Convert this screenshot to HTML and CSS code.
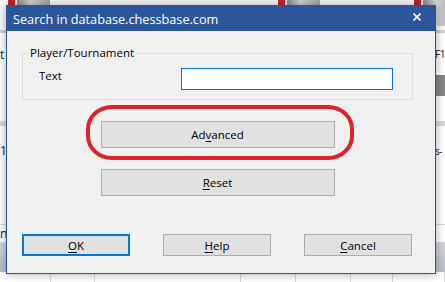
FILE: index.html
```html
<!DOCTYPE html>
<html lang="en">
<head>
    <meta charset="UTF-8">
    <meta name="viewport" content="width=device-width, initial-scale=1.0">
    <title>Search in database.chessbase.com</title>
    <link rel="stylesheet" href="styles.css">
</head>
<body>
    <!-- the application window behind the dialog -->
    <div class="backdrop">
        <div class="ribbon">
            <div class="tool tool-left"><span class="flag"></span><span class="drum"></span></div>
            <span class="sep sep-one"></span>
            <span class="sep sep-two"></span>
            <div class="tool tool-mid"><span class="flag"></span><span class="drum"></span></div>
            <div class="tool tool-right"><span class="flag"></span><span class="drum"></span></div>
        </div>
        <div class="ribbon-line"></div>
        <div class="row row-title">
            <div class="cut">t</div>
            <div class="tail">F1</div>
        </div>
        <div class="row row-tools">
            <div class="cut"></div>
            <div class="tail"><span class="tail-block"></span></div>
        </div>
        <div class="row row-gap"></div>
        <div class="row-band"></div>
        <div class="row row-item">
            <div class="cut">10</div>
            <div class="tail">s-</div>
        </div>
        <div class="row row-empty"></div>
        <div class="row row-last">
            <div class="cut">ns</div>
            <div class="tail"></div>
        </div>
        <div class="status-band"></div>
        <div class="table-row">
            <span></span><span></span><span></span><span></span><span></span><span></span><span></span>
        </div>
    </div>

    <div class="dialog">
        <div class="titlebar">
            <span class="title">Search in database.chessbase.com</span>
            <span class="close">
                <svg width="8" height="8" viewBox="0 0 8 8">
                    <path d="M0.5 0.5 L7.5 7.5 M7.5 0.5 L0.5 7.5" stroke="#fff" stroke-width="1.6" fill="none"/>
                </svg>
            </span>
        </div>

        <div class="content">
            <fieldset class="group">
                <legend>Player/Tournament</legend>
                <div class="field-row">
                    <label for="text">Text</label>
                    <input type="text" id="text" class="text-input">
                </div>
            </fieldset>

            <div class="advanced-wrap">
                <button class="btn btn-wide">Ad<u>v</u>anced</button>
                <span class="mark"></span>
            </div>

            <button class="btn btn-wide btn-reset"><u>R</u>eset</button>

            <div class="actions">
                <button class="btn btn-small btn-default"><u>O</u>K</button>
                <button class="btn btn-small"><u>H</u>elp</button>
                <button class="btn btn-small"><u>C</u>ancel</button>
            </div>
        </div>
    </div>
</body>
</html>
```

FILE: styles.css
```css
* {
    margin: 0;
    padding: 0;
    box-sizing: border-box;
}

body {
    position: relative;
    width: 445px;
    height: 282px;
    overflow: hidden;
    background: #fff;
    font-family: 'Open Sans', 'Noto Sans', sans-serif;
    font-size: 11.5px;
    color: #000;
}

/* ---------- background window ---------- */

.backdrop {
    display: flex;
    flex-direction: column;
    height: 100%;
    font-size: 12px;
    color: #222;
}

.ribbon {
    display: flex;
    align-items: flex-start;
    height: 30px;
    background: #fafafa;
}

.tool {
    display: flex;
    align-items: flex-start;
}

.flag {
    width: 7px;
    height: 12px;
    background: #c8202c;
}

.drum {
    width: 33px;
    height: 26px;
    margin-left: 2px;
    border-radius: 0 0 14px 14px / 0 0 6px 6px;
    background: linear-gradient(90deg, #8d8d8d, #d6d6d6 40%, #a4a4a4);
}

.tool-left { margin-left: 8px; }
.tool-mid { margin-left: 91px; }
.tool-right { margin-left: 94px; }

.sep {
    width: 1px;
    height: 30px;
    background: #c9c9c9;
}

.sep-one { margin-left: 91px; }
.sep-two { margin-left: 46px; }

.ribbon-line {
    height: 3px;
    background: #cfd1d4;
}

.row {
    display: flex;
    justify-content: space-between;
    align-items: center;
}

.cut {
    width: 14px;
    white-space: nowrap;
}

.tail {
    width: 10px;
    white-space: nowrap;
    font-size: 10px;
    letter-spacing: -0.5px;
}

.row-title { height: 42px; }
.row-tools { height: 21px; }
.row-gap { height: 25px; }
.row-item { height: 49px; }
.row-empty { height: 50px; border-bottom: 1px solid #d8d8d8; }
.row-last { height: 17px; }

.tail-block {
    display: block;
    width: 10px;
    height: 21px;
    background: #858585;
}

.row-band {
    height: 5px;
    background: #d9d9d9;
}

.status-band {
    height: 30px;
    background: linear-gradient(180deg, #d3d6db, #b9bec6);
}

.table-row {
    display: grid;
    grid-template-columns: 51px 44px 146px 55px 55px 42px 1fr;
    flex: 1;
}

.table-row span {
    border-right: 1px solid #d9d9d9;
}

/* ---------- dialog ---------- */

.dialog {
    position: absolute;
    left: 6px;
    top: 5px;
    width: 430px;
    height: 269px;
    display: flex;
    flex-direction: column;
    background: #f0f0f0;
    border: 1px solid #2b579a;
    box-shadow: 0 0 9px rgba(0, 0, 0, 0.35);
}

.titlebar {
    display: flex;
    justify-content: space-between;
    align-items: center;
    flex: none;
    height: 25px;
    padding: 0 14px 0 6px;
    background: #2b579a;
    color: #fff;
}

.title {
    font-size: 12.7px;
}

.close {
    align-self: flex-start;
    margin-top: 7px;
}

.close svg {
    display: block;
}

.content {
    flex: 1;
    display: flex;
    flex-direction: column;
    padding: 14px 22px 17px 15px;
}

.group {
    border: 1px solid #dcdcdc;
    padding: 0;
}

.group legend {
    margin-left: 5px;
    padding: 0 2px;
    line-height: 16px;
}

.field-row {
    display: flex;
    justify-content: space-between;
    align-items: flex-start;
    padding: 7px 19px 9px 16px;
}

.field-row label {
    line-height: 16px;
}

.text-input {
    width: 212px;
    height: 22px;
    border: 1px solid #0078d7;
    background: #fff;
    outline: none;
}

.btn {
    font: inherit;
    color: #000;
    background: #e1e1e1;
    border: 1px solid #adadad;
}

.btn u {
    text-underline-offset: 2px;
}

.btn-wide {
    width: 234px;
    height: 27px;
}

.advanced-wrap {
    position: relative;
    align-self: center;
    margin-top: 21px;
}

.advanced-wrap .btn {
    display: block;
}

/* red annotation drawn round the Advanced button */
.mark {
    position: absolute;
    top: -16px;
    bottom: -12px;
    left: -15px;
    right: -19px;
    border: 4px solid #e0202a;
    border-radius: 26px / 24px;
    pointer-events: none;
}

.btn-reset {
    align-self: center;
    margin-top: 21px;
}

.actions {
    display: flex;
    justify-content: space-between;
    margin-top: auto;
    padding-right: 1px;
}

.btn-small {
    width: 108px;
    height: 22px;
}

.btn-default {
    border: 2px solid #0078d7;
}
```
